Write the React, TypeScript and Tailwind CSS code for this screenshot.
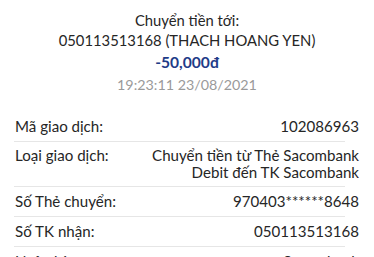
import React from "react";

const rows: { label: string; value: string[]; pad: string }[] = [
  { label: "Mã giao dịch:", value: ["102086963"], pad: "py-[6px]" },
  {
    label: "Loại giao dịch:",
    value: ["Chuyển tiền từ Thẻ Sacombank", "Debit đến TK Sacombank"],
    pad: "py-[5px]",
  },
  { label: "Số Thẻ chuyển:", value: ["970403******8648"], pad: "py-[6px]" },
  { label: "Số TK nhận:", value: ["050113513168"], pad: "py-[6px]" },
  { label: "Ngân hàng", value: ["Sacombank"], pad: "py-[6px]" },
];

export default function App() {
  return (
    <div
      className="w-[374px] h-[257px] overflow-hidden bg-white text-[#262626]"
      style={{ fontFamily: "Lato, 'Noto Sans', sans-serif" }}
    >
      {/* Header */}
      <div className="flex flex-col items-center pt-[10px]">
        <div className="text-[14.8px] leading-[20px]">Chuyển tiền tới:</div>
        <div className="text-[14.8px] leading-[20px]">050113513168 (THACH HOANG YEN)</div>
        <div className="mt-[2px] text-[15.6px] leading-[21px] font-bold text-[#1f3c88]">-50,000đ</div>
        <div className="mt-px text-[14.3px] leading-[21px] text-[#9a9a9a]">19:23:11 23/08/2021</div>
      </div>

      {/* Detail rows */}
      <div className="mt-[17px]">
        {rows.map((row) => (
          <div key={row.label}>
            <div className={`flex justify-between px-[15px] ${row.pad} text-[15.1px] leading-[17px]`}>
              <span>{row.label}</span>
              <div className="flex flex-col items-end text-right">
                {row.value.map((v) => (
                  <span key={v}>{v}</span>
                ))}
              </div>
            </div>
            <div className="h-px bg-[#e6e6e6] ml-[14px] mr-[29px]" />
          </div>
        ))}
      </div>
    </div>
  );
}
